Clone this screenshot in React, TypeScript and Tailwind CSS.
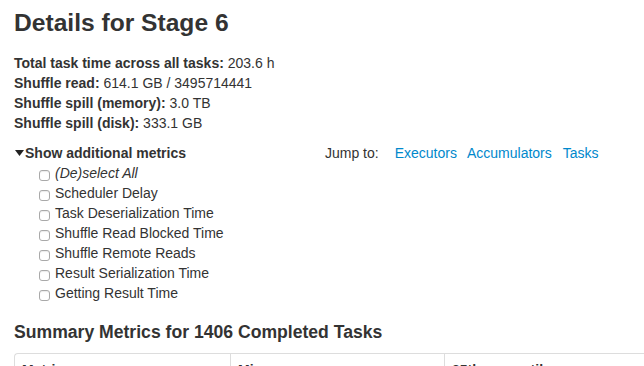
import React from "react";

const metrics = [
  "Scheduler Delay",
  "Task Deserialization Time",
  "Shuffle Read Blocked Time",
  "Shuffle Remote Reads",
  "Result Serialization Time",
  "Getting Result Time",
];

function Checkbox() {
  return (
    <span className="mt-[7px] inline-block h-[11px] w-[11px] shrink-0 rounded-[3px] border border-[#a9a9a9] bg-white shadow-[inset_0_1px_1px_rgba(0,0,0,0.08)]" />
  );
}

export default function App() {
  return (
    <div className="h-[366px] w-[644px] overflow-hidden bg-white pl-[14px] font-['Liberation_Sans',Arial,sans-serif] text-[14px] leading-[20px] text-[#333]">
      {/* Header */}
      <h3 className="mt-[10px] text-[24.6px] font-bold leading-[26px] text-[#333]">
        Details for Stage 6
      </h3>

      {/* Stage summary */}
      <ul className="mt-[17px]">
        <li>
          <strong>Total task time across all tasks:</strong> 203.6 h
        </li>
        <li>
          <strong>Shuffle read:</strong> 614.1 GB / 3495714441
        </li>
        <li>
          <strong>Shuffle spill (memory):</strong> 3.0 TB
        </li>
        <li>
          <strong>Shuffle spill (disk):</strong> 333.1 GB
        </li>
      </ul>

      {/* Additional metrics + jump links */}
      <div className="mt-[10px] flex">
        <div className="w-[311px]">
          <div className="flex items-center font-bold">
            <svg width="9" height="6" viewBox="0 0 9 6" className="ml-[1px] mr-[1px]">
              <path d="M0 0 L9 0 L4.5 6 Z" fill="#222" />
            </svg>
            Show additional metrics
          </div>
          <div className="pl-[25px]">
            <div className="flex gap-[5px]">
              <Checkbox />
              <span className="italic">(De)select All</span>
            </div>
            {metrics.map((m) => (
              <div key={m} className="flex gap-[5px]">
                <Checkbox />
                <span>{m}</span>
              </div>
            ))}
          </div>
        </div>
        <div className="flex h-[20px]">
          <span>Jump to:</span>
          <a className="ml-[16px] text-[#0088cc]">Executors</a>
          <a className="ml-[10px] text-[#0088cc]">Accumulators</a>
          <a className="ml-[11px] text-[#0088cc]">Tasks</a>
        </div>
      </div>

      {/* Summary metrics */}
      <h4 className="mt-[17px] text-[17.6px] font-bold leading-[24px] text-[#333]">
        Summary Metrics for 1406 Completed Tasks
      </h4>
      <div className="mt-[9px] w-[700px] rounded-tl-[4px] border-l border-t border-[#dddddd]">
        <div className="flex font-bold">
          <div className="w-[215px] px-[7px] pt-[6px]">Metric</div>
          <div className="w-[214px] border-l border-[#dddddd] px-[7px] pt-[6px]">Min</div>
          <div className="w-[214px] border-l border-[#dddddd] px-[7px] pt-[6px]">25th percentile</div>
        </div>
      </div>
    </div>
  );
}
